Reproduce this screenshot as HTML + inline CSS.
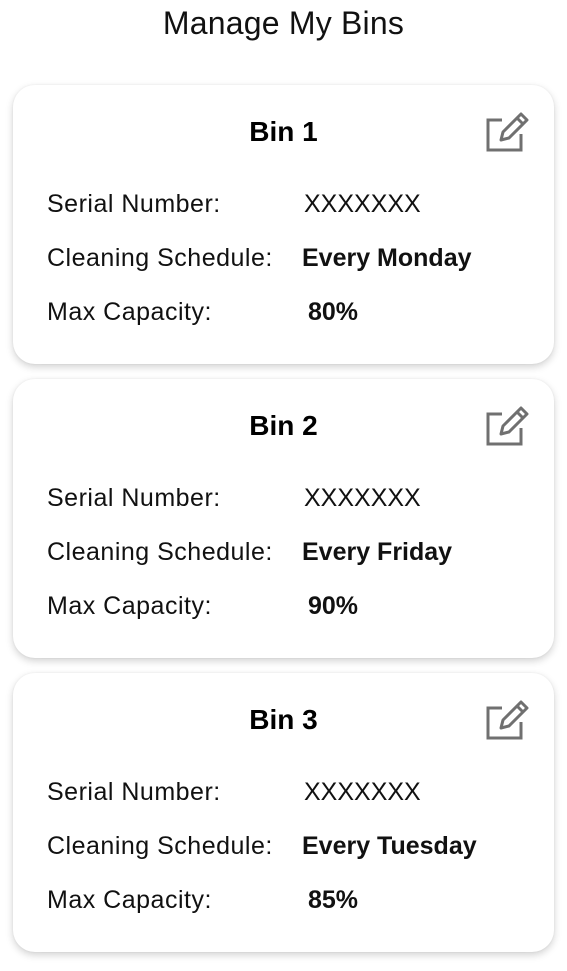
<!DOCTYPE html>
<html><head><meta charset="utf-8"><style>
body{margin:0;width:567px;height:971px;background:#fff;font-family:"Liberation Sans",sans-serif;position:relative;overflow:hidden}
h1{position:absolute;top:5px;left:0;width:567px;text-align:center;margin:0;font-weight:normal;font-size:32px;color:#111;letter-spacing:0.2px}
.card{position:absolute;left:13px;width:541px;height:279px;background:#fff;border-radius:22px;box-shadow:0 3px 8px rgba(0,0,0,0.18),0 0 2px rgba(0,0,0,0.06)}
.t{position:absolute;top:31px;left:0;width:541px;text-align:center;font-weight:bold;font-size:28px;color:#000}
.l,.v{position:absolute;font-size:25px;color:#111;white-space:nowrap}
.l{left:34px;letter-spacing:0.5px}
.v{font-weight:bold;color:#111}
svg{position:absolute;left:472px;top:27px}
</style></head><body>
<h1>Manage My Bins</h1>

<div class="card" style="top:85px">
<div class="t">Bin 1</div>
<svg width="44" height="42" viewBox="0 0 44 42" fill="none" stroke="#707070" stroke-width="3"><path d="M17 8H3v30h33V22"/><path d="M36 2l6 6-18 18-8 2 2-8z" stroke-linejoin="round"/><path d="M32 6l6 6"/></svg>
<div class="l" style="top:105px">Serial Number:</div><div class="v" style="left:291px;top:105px;font-weight:normal">XXXXXXX</div>
<div class="l" style="top:159px">Cleaning Schedule:</div><div class="v" style="left:289px;top:159px">Every Monday</div>
<div class="l" style="top:213px">Max Capacity:</div><div class="v" style="left:295px;top:213px">80%</div>
</div>

<div class="card" style="top:379px">
<div class="t">Bin 2</div>
<svg width="44" height="42" viewBox="0 0 44 42" fill="none" stroke="#707070" stroke-width="3"><path d="M17 8H3v30h33V22"/><path d="M36 2l6 6-18 18-8 2 2-8z" stroke-linejoin="round"/><path d="M32 6l6 6"/></svg>
<div class="l" style="top:105px">Serial Number:</div><div class="v" style="left:291px;top:105px;font-weight:normal">XXXXXXX</div>
<div class="l" style="top:159px">Cleaning Schedule:</div><div class="v" style="left:289px;top:159px">Every Friday</div>
<div class="l" style="top:213px">Max Capacity:</div><div class="v" style="left:295px;top:213px">90%</div>
</div>

<div class="card" style="top:673px">
<div class="t">Bin 3</div>
<svg width="44" height="42" viewBox="0 0 44 42" fill="none" stroke="#707070" stroke-width="3"><path d="M17 8H3v30h33V22"/><path d="M36 2l6 6-18 18-8 2 2-8z" stroke-linejoin="round"/><path d="M32 6l6 6"/></svg>
<div class="l" style="top:105px">Serial Number:</div><div class="v" style="left:291px;top:105px;font-weight:normal">XXXXXXX</div>
<div class="l" style="top:159px">Cleaning Schedule:</div><div class="v" style="left:289px;top:159px">Every Tuesday</div>
<div class="l" style="top:213px">Max Capacity:</div><div class="v" style="left:295px;top:213px">85%</div>
</div>
</body></html>
